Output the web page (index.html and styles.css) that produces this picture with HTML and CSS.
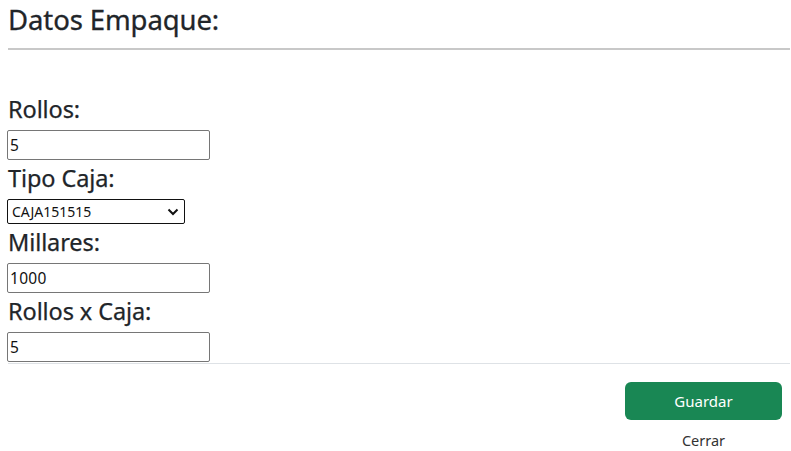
FILE: index.html
```html
<!DOCTYPE html>
<html>
<head>
<meta charset="utf-8">
<link rel="stylesheet" href="styles.css">
</head>
<body>
<div class="page">
  <h3 class="title">Datos Empaque:</h3>
  <hr class="rule">
  <form class="form">
    <label class="lbl">Rollos:</label>
    <input class="inp" type="text" value="5">
    <label class="lbl">Tipo Caja:</label>
    <div class="sel-wrap">
      <select class="sel"><option>CAJA151515</option></select>
      <svg class="chev" width="12" height="8" viewBox="0 0 12 8"><path d="M1.5 1.5 L6 6 L10.5 1.5" fill="none" stroke="#111" stroke-width="2"/></svg>
    </div>
    <label class="lbl">Millares:</label>
    <input class="inp" type="text" value="1000">
    <label class="lbl">Rollos x Caja:</label>
    <input class="inp" type="text" value="5">
  </form>
  <div class="footer">
    <button class="btn" type="button">Guardar</button>
    <span class="close">Cerrar</span>
  </div>
</div>
</body>
</html>
```
FILE: styles.css
```css
html, body { margin: 0; padding: 0; background: #fff; }
body { font-family: "Noto Sans", "Open Sans", sans-serif; color: #212529; }
.page { padding: 0 1px 0 8px; }
.title { margin: 0; font-size: 27.5px; font-weight: 400; line-height: 34px; padding-top: 3px; letter-spacing: -0.1px; -webkit-text-stroke: 0.3px #212529; }
.rule { margin: 11px 0 0; border: 0; border-top: 2px solid #c8c8c8; height: 0; }
.form { display: flex; flex-direction: column; align-items: flex-start; padding-top: 41px; }
.lbl { font-size: 23.5px; line-height: 36px; height: 39px; letter-spacing: -0.1px; -webkit-text-stroke: 0.25px #212529; }
.inp { box-sizing: border-box; width: 203px; height: 30px; margin: 0 0 0 -1px; border: 1px solid #767676; border-radius: 2px; padding: 0 2px; font-family: "Noto Sans", sans-serif; font-size: 15.5px; letter-spacing: 0.3px; color: #111; }
.sel-wrap { position: relative; margin-left: -1px; }
.sel { appearance: none; -webkit-appearance: none; box-sizing: border-box; width: 178px; height: 25px; border: 1px solid #111; border-radius: 2px; padding: 0 4px; background: #fff; font-family: "Noto Sans", sans-serif; font-size: 14px; color: #111; display: block; }
.chev { position: absolute; right: 6px; top: 9px; pointer-events: none; }
.footer { border-top: 1px solid #dee2e6; margin-top: 1px; display: flex; flex-direction: column; align-items: flex-end; padding: 18px 8px 0 0; }
.btn { width: 157px; height: 38px; background: #198754; color: #fff; border: 0; border-radius: 6px; font-family: "Noto Sans", sans-serif; font-size: 15px; }
.close { width: 157px; text-align: center; font-size: 14.5px; color: #333; margin-top: 10px; }
```
